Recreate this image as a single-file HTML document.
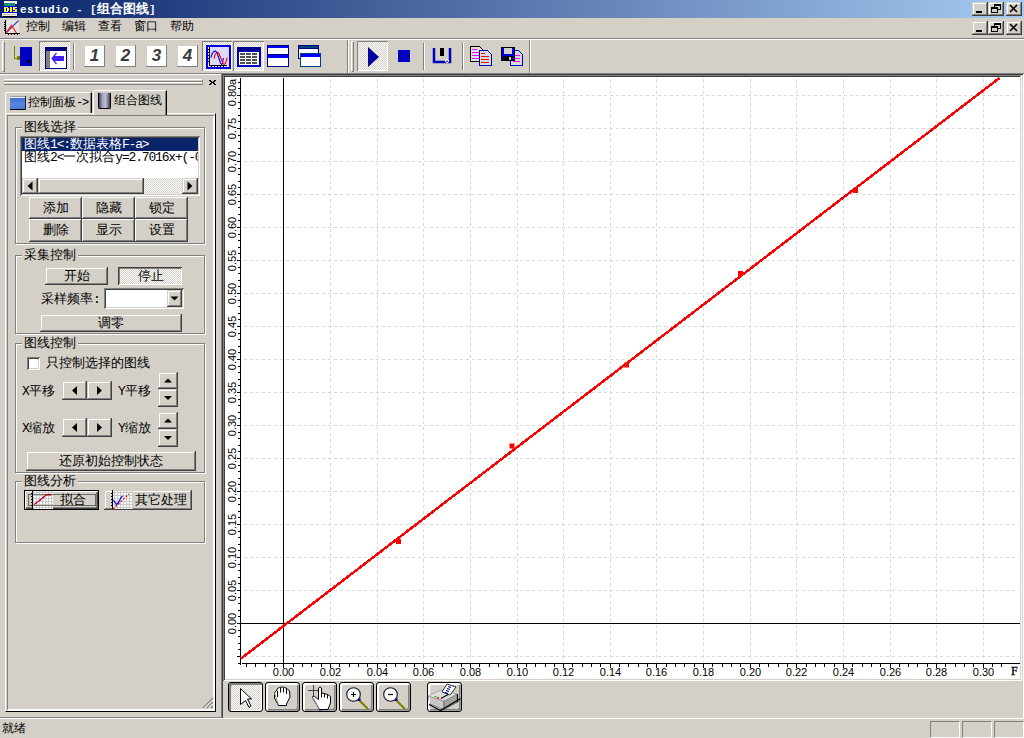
<!DOCTYPE html><html><head><meta charset="utf-8"><style>
*{margin:0;padding:0;box-sizing:border-box}
html,body{width:1024px;height:738px;overflow:hidden;background:#d4d0c8;font-family:"Liberation Sans",sans-serif;font-size:12px;color:#000}
div{position:absolute}
.t{white-space:nowrap;line-height:13px;font-size:13px;margin-top:-1px}
.rz{background:#d4d0c8;box-shadow:inset -1px -1px #404040,inset 1px 1px #fff,inset -2px -2px #808080}
.rz2{background:#d4d0c8;box-shadow:inset -1px -1px #404040,inset 1px 1px #d4d0c8,inset -2px -2px #808080,inset 2px 2px #fff}
.sk{background:#fff;box-shadow:inset 1px 1px #808080,inset -1px -1px #fff,inset 2px 2px #404040,inset -2px -2px #d4d0c8}
.pr{box-shadow:inset 1px 1px #808080,inset -1px -1px #fff;background:conic-gradient(#fff 25%,#d4d0c8 0 50%,#fff 0 75%,#d4d0c8 0) 0 0/2px 2px}
.dith{background:conic-gradient(#fff 25%,#d4d0c8 0 50%,#fff 0 75%,#d4d0c8 0) 0 0/2px 2px}
.etch{border:1px solid #808080;box-shadow:inset 1px 1px #fff,1px 1px #fff}
.m{font-family:'Liberation Mono',monospace;letter-spacing:-0.09em}
.cap{background:#d4d0c8;padding:0 2px}
.bb{border:1px solid #000;border-radius:3px;background:#d4d0c8;box-shadow:inset 2px 2px #fff,inset -1px -1px #a0a0a0,inset -2px -2px #808080}
svg{position:absolute;overflow:visible}
</style></head><body>
<div class="" style="left:0px;top:0px;width:1024px;height:18px;background:linear-gradient(to right,#0a246a,#a6caf0)"></div>
<svg style="left:2px;top:1px" width="16" height="16" shape-rendering="crispEdges">
<rect x="2" y="0" width="13" height="3" fill="#f8f8f0"/>
<rect x="2" y="2" width="11" height="3" fill="#208878"/>
<rect x="6" y="3" width="1" height="1" fill="#00ff00"/>
<rect x="1" y="5" width="15" height="9" fill="#0000ff"/>
<g fill="#ffff00">
<rect x="2" y="6" width="2" height="5"/><rect x="4" y="6" width="2" height="1"/><rect x="4" y="10" width="2" height="1"/><rect x="5" y="7" width="2" height="3"/>
<rect x="8" y="6" width="2" height="5"/>
<rect x="11" y="6" width="4" height="1"/><rect x="11" y="7" width="2" height="1"/><rect x="11" y="8" width="4" height="1"/><rect x="13" y="9" width="2" height="1"/><rect x="11" y="10" width="4" height="1"/>
</g>
<rect x="0" y="12" width="15" height="3" fill="#f0f0e0"/>
<rect x="1" y="13" width="13" height="1" fill="#c8c8b8"/>
<rect x="1" y="15" width="14" height="1" fill="#000"/>
<rect x="15" y="2" width="1" height="13" fill="#0000c0"/>
</svg>
<div class="t" style="left:20px;top:3px;color:#fff;font-weight:bold"><span class="m" style="letter-spacing:0.4px;font-size:11px">estudio - [</span>组合图线<span class="m" style="font-size:11px">]</span></div>
<div class="rz2" style="left:972px;top:2px;width:16px;height:14px;"></div>
<div class="" style="left:976px;top:11px;width:6px;height:2px;background:#000"></div>
<div class="rz2" style="left:988px;top:2px;width:16px;height:14px;"></div>
<svg style="left:988px;top:2px" width="16" height="14"><rect x="6.5" y="2.5" width="6" height="5" fill="none" stroke="#000"/><rect x="6" y="2" width="7" height="2" fill="#000"/><rect x="3.5" y="5.5" width="6" height="5" fill="#d4d0c8" stroke="#000"/><rect x="3" y="5" width="7" height="2" fill="#000"/></svg>
<div class="rz2" style="left:1006px;top:2px;width:16px;height:14px;"></div>
<svg style="left:1006px;top:2px" width="16" height="14"><path d="M4 3L11 10M11 3L4 10" stroke="#000" stroke-width="1.6"/></svg>
<div class="rz2" style="left:972px;top:21px;width:16px;height:14px;"></div>
<div class="" style="left:976px;top:30px;width:6px;height:2px;background:#000"></div>
<div class="rz2" style="left:988px;top:21px;width:16px;height:14px;"></div>
<svg style="left:988px;top:21px" width="16" height="14"><rect x="6.5" y="2.5" width="6" height="5" fill="none" stroke="#000"/><rect x="6" y="2" width="7" height="2" fill="#000"/><rect x="3.5" y="5.5" width="6" height="5" fill="#d4d0c8" stroke="#000"/><rect x="3" y="5" width="7" height="2" fill="#000"/></svg>
<div class="rz2" style="left:1006px;top:21px;width:16px;height:14px;"></div>
<svg style="left:1006px;top:21px" width="16" height="14"><path d="M4 3L11 10M11 3L4 10" stroke="#000" stroke-width="1.6"/></svg>
<svg style="left:4px;top:20px" width="16" height="16" shape-rendering="crispEdges">
<rect x="3" y="0" width="12" height="13" fill="#e4e4e4"/>
<rect x="1" y="0" width="1" height="14" fill="#000"/>
<rect x="1" y="13" width="15" height="1" fill="#000"/>
<g fill="#000"><rect x="0" y="2" width="1" height="1"/><rect x="0" y="4" width="1" height="1"/><rect x="0" y="6" width="1" height="1"/><rect x="0" y="8" width="1" height="1"/><rect x="0" y="10" width="1" height="1"/>
<rect x="4" y="14" width="1" height="1"/><rect x="7" y="14" width="1" height="1"/><rect x="10" y="14" width="1" height="1"/><rect x="13" y="14" width="1" height="1"/></g>
</svg>
<svg style="left:4px;top:20px" width="16" height="16">
<path d="M2.5 12.5L14.5 0.5" stroke="#4040c0" stroke-width="1.1"/>
<path d="M2 13L7.5 5.5L12.5 13" stroke="#ff2020" stroke-width="1.3" fill="none"/>
</svg>
<div class="t" style="left:26px;top:21px;font-size:12px;line-height:12px">控制</div>
<div class="t" style="left:62px;top:21px;font-size:12px;line-height:12px">编辑</div>
<div class="t" style="left:98px;top:21px;font-size:12px;line-height:12px">查看</div>
<div class="t" style="left:134px;top:21px;font-size:12px;line-height:12px">窗口</div>
<div class="t" style="left:170px;top:21px;font-size:12px;line-height:12px">帮助</div>
<div class="" style="left:0px;top:38px;width:1024px;height:1px;background:#808080"></div>
<div class="" style="left:0px;top:39px;width:1024px;height:1px;background:#fff"></div>
<div class="" style="left:0px;top:73px;width:1024px;height:1px;background:#808080"></div>
<div class="" style="left:2px;top:41px;width:3px;height:31px;border-left:1px solid #fff;border-top:1px solid #fff;border-right:1px solid #808080;border-bottom:1px solid #808080"></div>
<svg style="left:13px;top:45px" width="22" height="22" shape-rendering="crispEdges">
<rect x="1" y="1" width="1" height="13" fill="#808000"/>
<rect x="1" y="13" width="6" height="1" fill="#808000"/>
<rect x="4" y="11" width="3" height="4" fill="#808000"/>
<rect x="7" y="2" width="12" height="19" fill="#0000c0"/>
<rect x="14" y="15" width="3" height="3" fill="#000"/>
</svg>
<div class="pr" style="left:39px;top:41px;width:31px;height:30px;"></div>
<svg style="left:45px;top:47px" width="22" height="22" shape-rendering="crispEdges">
<rect x="0" y="0" width="22" height="22" fill="#000080"/>
<rect x="1" y="4" width="4" height="17" fill="#808080"/>
<rect x="5" y="4" width="16" height="17" fill="#fff"/>
<rect x="8" y="9" width="11" height="5" fill="#4020ff"/>
</svg>
<svg style="left:45px;top:47px" width="22" height="22"><path d="M11.5 6L7 11.5L11.5 17" stroke="#4020ff" stroke-width="1.2" fill="none"/><path d="M7 11.5L10 9V14z" fill="#4020ff"/></svg>
<div class="" style="left:73px;top:43px;width:1px;height:27px;background:#808080"></div>
<div class="" style="left:74px;top:43px;width:1px;height:27px;background:#fff"></div>
<div class="" style="left:85px;top:46px;width:19px;height:20px;background:#fff"></div>
<div class="" style="left:104px;top:45px;width:1px;height:22px;background:#808080"></div>
<div class="" style="left:84px;top:66px;width:21px;height:1px;background:#808080"></div>
<svg style="left:85px;top:46px" width="19" height="20"><text x="9.5" y="15" text-anchor="middle" font-family="Liberation Sans" font-weight="bold" font-style="italic" font-size="17" fill="#3c3c3c">1</text></svg>
<div class="" style="left:116px;top:46px;width:19px;height:20px;background:#fff"></div>
<div class="" style="left:135px;top:45px;width:1px;height:22px;background:#808080"></div>
<div class="" style="left:115px;top:66px;width:21px;height:1px;background:#808080"></div>
<svg style="left:116px;top:46px" width="19" height="20"><text x="9.5" y="15" text-anchor="middle" font-family="Liberation Sans" font-weight="bold" font-style="italic" font-size="17" fill="#3c3c3c">2</text></svg>
<div class="" style="left:147px;top:46px;width:19px;height:20px;background:#fff"></div>
<div class="" style="left:166px;top:45px;width:1px;height:22px;background:#808080"></div>
<div class="" style="left:146px;top:66px;width:21px;height:1px;background:#808080"></div>
<svg style="left:147px;top:46px" width="19" height="20"><text x="9.5" y="15" text-anchor="middle" font-family="Liberation Sans" font-weight="bold" font-style="italic" font-size="17" fill="#3c3c3c">3</text></svg>
<div class="" style="left:178px;top:46px;width:19px;height:20px;background:#fff"></div>
<div class="" style="left:197px;top:45px;width:1px;height:22px;background:#808080"></div>
<div class="" style="left:177px;top:66px;width:21px;height:1px;background:#808080"></div>
<svg style="left:178px;top:46px" width="19" height="20"><text x="9.5" y="15" text-anchor="middle" font-family="Liberation Sans" font-weight="bold" font-style="italic" font-size="17" fill="#3c3c3c">4</text></svg>
<div class="pr" style="left:202px;top:41px;width:30px;height:30px;"></div>
<svg style="left:206px;top:45px" width="25" height="24" shape-rendering="crispEdges">
<rect x="0" y="0" width="25" height="24" fill="#0000e0"/>
<rect x="2" y="2" width="21" height="20" fill="#dcdcf8"/>
<path d="M3.5 2V21M3 20.5H21" stroke="#000"/>
<path d="M2 4.5H3M2 7.5H3M2 10.5H3M2 13.5H3M2 16.5H3M5.5 21V22M8.5 21V22M11.5 21V22M14.5 21V22M17.5 21V22" stroke="#000"/>
</svg>
<svg style="left:206px;top:45px" width="25" height="24">
<polyline points="5,12.5 6,9 7.5,7 9,6 10.5,7 11.5,9 12.5,12 13.5,15 14.5,18 15.5,19.5 16.5,18.5 17,15 17.5,13" fill="none" stroke="#0000ff" stroke-width="1.1"/>
<polyline points="8,13.5 9,10 10.5,8 12,7.5 13,8.5 14,11 15,13.5 16,16 17,18.5 18,19.5 19.5,18.5 20.5,15 21,12.5" fill="none" stroke="#ff0000" stroke-width="1.1"/>
</svg>
<div class="pr" style="left:233px;top:41px;width:31px;height:30px;"></div>
<svg style="left:237px;top:47px" width="24" height="20" shape-rendering="crispEdges">
<rect x="0" y="0" width="24" height="20" fill="#0000c0"/>
<rect x="0" y="0" width="24" height="4" fill="#000090"/>
<rect x="2" y="5" width="20" height="13" fill="#fff"/>
<g fill="#505050"><rect x="3" y="6" width="5" height="2"/><rect x="9" y="6" width="5" height="2"/><rect x="15" y="6" width="5" height="2"/>
<rect x="3" y="9" width="5" height="2"/><rect x="9" y="9" width="5" height="2"/><rect x="15" y="9" width="5" height="2"/>
<rect x="3" y="12" width="5" height="2"/><rect x="9" y="12" width="5" height="2"/><rect x="15" y="12" width="5" height="2"/>
<rect x="3" y="15" width="5" height="2"/><rect x="9" y="15" width="5" height="2"/><rect x="15" y="15" width="5" height="2"/></g>
</svg>
<svg style="left:267px;top:45px" width="22" height="22" shape-rendering="crispEdges">
<rect x="0" y="0" width="22" height="22" fill="#000080"/>
<rect x="1" y="1" width="20" height="2" fill="#0000ff"/>
<rect x="1" y="3" width="20" height="6" fill="#fff"/>
<rect x="1" y="10" width="20" height="3" fill="#0000ff"/>
<rect x="1" y="13" width="20" height="8" fill="#fff"/>
</svg>
<svg style="left:298px;top:45px" width="24" height="22" shape-rendering="crispEdges">
<rect x="0" y="0" width="21" height="14" fill="#000080"/>
<rect x="1" y="1" width="19" height="2" fill="#004080"/>
<rect x="1" y="4" width="19" height="9" fill="#fff"/>
<rect x="2" y="8" width="21" height="14" fill="#004080"/>
<rect x="3" y="9" width="19" height="3" fill="#0000ff"/>
<rect x="3" y="12" width="19" height="9" fill="#fff"/>
</svg>
<div class="" style="left:347px;top:40px;width:1px;height:33px;background:#808080"></div>
<div class="" style="left:348px;top:40px;width:1px;height:33px;background:#fff"></div>
<div class="" style="left:351px;top:41px;width:3px;height:31px;border-left:1px solid #fff;border-top:1px solid #fff;border-right:1px solid #808080;border-bottom:1px solid #808080"></div>
<div class="pr" style="left:357px;top:41px;width:31px;height:30px;"></div>
<svg style="left:367px;top:46px" width="14" height="22"><path d="M1 1L12 11L1 21z" fill="#0000a0"/></svg>
<div class="" style="left:398px;top:50px;width:12px;height:12px;background:#0000c0"></div>
<div class="" style="left:423px;top:43px;width:1px;height:27px;background:#808080"></div>
<div class="" style="left:424px;top:43px;width:1px;height:27px;background:#fff"></div>
<svg style="left:432px;top:46px" width="20" height="19">
<path d="M2 2V16H18V2" stroke="#0000c0" stroke-width="2.5" fill="none"/>
<rect x="8" y="2" width="4" height="8" fill="#000"/>
<circle cx="15" cy="15" r="1.5" fill="none" stroke="#fff"/>
</svg>
<div class="" style="left:462px;top:43px;width:1px;height:27px;background:#808080"></div>
<div class="" style="left:463px;top:43px;width:1px;height:27px;background:#fff"></div>
<svg style="left:470px;top:46px" width="23" height="21" shape-rendering="crispEdges">
<path d="M0.5 0.5H9.5L12.5 3.5V15.5H0.5z" fill="#dce4e4" stroke="#000"/>
<g stroke="#ff00ff"><path d="M2 3.5H7M2 6.5H9M2 9.5H9M2 12.5H9"/></g>
<path d="M9.5 4.5H17.5L21.5 8.5V19.5H9.5z" fill="#d4dcdc" stroke="#0000c0"/>
<g stroke="#ff0000"><path d="M11 7.5H15M11 10.5H19M11 13.5H19M11 16.5H19"/></g>
</svg>
<svg style="left:501px;top:47px" width="23" height="20" shape-rendering="crispEdges">
<path d="M9.5 3.5H17.5L21.5 7.5V18.5H9.5z" fill="#d4dcdc" stroke="#0000c0"/>
<g stroke="#ff00ff"><path d="M12 8.5H19M12 11.5H19M12 14.5H19"/></g>
<rect x="0" y="0" width="14" height="14" fill="#000"/>
<rect x="1" y="1" width="12" height="12" fill="#0000e0"/>
<rect x="3" y="1" width="8" height="6" fill="#d4d0c8"/>
<rect x="2" y="9" width="10" height="5" fill="#000"/>
<rect x="8" y="10" width="2" height="3" fill="#d4d0c8"/>
</svg>
<div class="" style="left:529px;top:40px;width:1px;height:33px;background:#808080"></div>
<div class="" style="left:530px;top:40px;width:1px;height:33px;background:#fff"></div>
<div class="" style="left:0px;top:74px;width:221px;height:1px;background:#fff"></div>
<div class="" style="left:221px;top:74px;width:1px;height:644px;background:#808080"></div>
<div class="" style="left:222px;top:74px;width:1px;height:644px;background:#404040"></div>
<div class="" style="left:0px;top:717px;width:222px;height:1px;background:#808080"></div>
<div class="" style="left:4px;top:79px;width:199px;height:3px;border-top:1px solid #fff;border-bottom:1px solid #808080;border-right:1px solid #808080"></div>
<div class="" style="left:4px;top:82px;width:199px;height:3px;border-top:1px solid #fff;border-bottom:1px solid #808080;border-right:1px solid #808080"></div>
<svg style="left:209px;top:80px" width="7" height="6" shape-rendering="crispEdges"><g fill="#000">
<rect x="0" y="0" width="2" height="1"/><rect x="5" y="0" width="2" height="1"/>
<rect x="1" y="1" width="2" height="1"/><rect x="4" y="1" width="2" height="1"/>
<rect x="2" y="2" width="3" height="1"/>
<rect x="1" y="3" width="2" height="1"/><rect x="4" y="3" width="2" height="1"/>
<rect x="0" y="4" width="2" height="1"/><rect x="5" y="4" width="2" height="1"/></g></svg>
<div class="" style="left:5px;top:113px;width:211px;height:599px;border-left:1px solid #fff;border-top:1px solid #fff;border-right:1px solid #000;border-bottom:1px solid #000"></div>
<div class="" style="left:7px;top:115px;width:208px;height:596px;border-left:1px solid #808080;border-top:1px solid #808080;border-right:2px solid #fff;border-bottom:2px solid #fff"></div>
<div class="" style="left:5px;top:92px;width:87px;height:21px;border-left:1px solid #fff;border-top:1px solid #fff;border-right:1px solid #000;border-top-left-radius:2px;box-shadow:inset -1px 0 #808080;background:#d4d0c8"></div>
<div class="" style="left:10px;top:96px;width:16px;height:14px;background:linear-gradient(#a0a0a0 0 1px,#f0f0f0 1px 2px,#4070d0 2px,#5588e0 60%,#4a7ad8);border-bottom:1px solid #000;border-right:1px solid #102050"></div>
<div class="t" style="left:28px;top:97px;font-size:12px;line-height:12px">控制面板<span class="m">-&gt;</span></div>
<div class="" style="left:93px;top:90px;width:74px;height:25px;border-left:1px solid #fff;border-top:1px solid #fff;border-right:1px solid #000;border-top-left-radius:2px;box-shadow:inset -1px 0 #808080;background:#d4d0c8"></div>
<div class="" style="left:98px;top:93px;width:13px;height:16px;background:linear-gradient(90deg,#404050,#a0a0c0 30%,#c0c0d0 60%,#404050);border:1px solid #000;border-top:none;border-radius:0 0 2px 2px"></div>
<div class="t" style="left:114px;top:95px;font-size:12px;line-height:12px">组合图线</div>
<div class="etch" style="left:15px;top:127px;width:190px;height:117px;"></div>
<div class="t cap" style="left:22px;top:121px;">图线选择</div>
<div class="etch" style="left:15px;top:255px;width:190px;height:79px;"></div>
<div class="t cap" style="left:22px;top:249px;">采集控制</div>
<div class="etch" style="left:15px;top:343px;width:190px;height:130px;"></div>
<div class="t cap" style="left:22px;top:337px;">图线控制</div>
<div class="etch" style="left:15px;top:481px;width:190px;height:62px;"></div>
<div class="t cap" style="left:22px;top:475px;">图线分析</div>
<div class="sk" style="left:20px;top:136px;width:180px;height:60px;"></div>
<div class="" style="left:22px;top:138px;width:176px;height:13px;background:#0a246a"></div>
<div class="t" style="left:24px;top:138px;color:#fff">图线<span class="m">1&lt;:</span>数据表格<span class="m">F-a&gt;</span></div>
<div style="left:22px;top:151px;width:176px;height:13px;overflow:hidden"><div class="t" style="left:2px;top:0">图线<span class="m">2&lt;</span>一次拟合<span class="m">y=2.7016x+(-0.0023)&gt;</span></div></div>
<div class="dith" style="left:22px;top:178px;width:176px;height:16px;"></div>
<div class="rz2" style="left:22px;top:178px;width:16px;height:16px;"></div>
<svg style="left:0;top:0" width="1024" height="738"><polygon points="32.5,181.5 32.5,190.5 27.5,186.0" fill="#000"/></svg>
<div class="rz2" style="left:38px;top:178px;width:106px;height:16px;"></div>
<div class="rz2" style="left:182px;top:178px;width:16px;height:16px;"></div>
<svg style="left:0;top:0" width="1024" height="738"><polygon points="187.5,181.5 187.5,190.5 192.5,186.0" fill="#000"/></svg>
<div class="rz" style="left:29px;top:197px;width:53px;height:22px;"></div>
<div class="t" style="left:29px;top:202px;width:53px;text-align:center">添加</div>
<div class="rz" style="left:29px;top:219px;width:53px;height:23px;"></div>
<div class="t" style="left:29px;top:224px;width:53px;text-align:center">删除</div>
<div class="rz" style="left:82px;top:197px;width:53px;height:22px;"></div>
<div class="t" style="left:82px;top:202px;width:53px;text-align:center">隐藏</div>
<div class="rz" style="left:82px;top:219px;width:53px;height:23px;"></div>
<div class="t" style="left:82px;top:224px;width:53px;text-align:center">显示</div>
<div class="rz" style="left:135px;top:197px;width:53px;height:22px;"></div>
<div class="t" style="left:135px;top:202px;width:53px;text-align:center">锁定</div>
<div class="rz" style="left:135px;top:219px;width:53px;height:23px;"></div>
<div class="t" style="left:135px;top:224px;width:53px;text-align:center">设置</div>
<div class="rz2" style="left:45px;top:267px;width:63px;height:18px;"></div>
<div class="t" style="left:45px;top:270px;width:63px;text-align:center">开始</div>
<div class="pr" style="left:118px;top:267px;width:64px;height:18px;box-shadow:inset 1px 1px #404040,inset -1px -1px #fff,inset 2px 2px #808080"></div>
<div class="t" style="left:119px;top:270px;width:64px;text-align:center">停止</div>
<div class="t" style="left:41px;top:293px;">采样频率<span class="m">:</span></div>
<div class="sk" style="left:104px;top:288px;width:80px;height:21px;"></div>
<div class="rz2" style="left:167px;top:290px;width:15px;height:17px;"></div>
<svg style="left:0;top:0" width="1024" height="738"><polygon points="170.5,296.5 178.5,296.5 174.5,300.5" fill="#000"/></svg>
<div class="rz2" style="left:40px;top:314px;width:142px;height:18px;"></div>
<div class="t" style="left:40px;top:317px;width:142px;text-align:center">调零</div>
<div class="sk" style="left:27px;top:357px;width:13px;height:13px;"></div>
<div class="t" style="left:46px;top:357px;">只控制选择的图线</div>
<div class="t" style="left:22px;top:385px;"><span class="m">X</span>平移</div>
<div class="t" style="left:118px;top:385px;"><span class="m">Y</span>平移</div>
<div class="rz2" style="left:62px;top:381px;width:25px;height:19px;"></div>
<svg style="left:0;top:0" width="1024" height="738"><polygon points="77.0,386.0 77.0,395.0 72.0,390.5" fill="#000"/></svg>
<div class="rz2" style="left:87px;top:381px;width:25px;height:19px;"></div>
<svg style="left:0;top:0" width="1024" height="738"><polygon points="97.0,386.0 97.0,395.0 102.0,390.5" fill="#000"/></svg>
<div class="t" style="left:22px;top:422px;"><span class="m">X</span>缩放</div>
<div class="t" style="left:118px;top:422px;"><span class="m">Y</span>缩放</div>
<div class="rz2" style="left:62px;top:418px;width:25px;height:19px;"></div>
<svg style="left:0;top:0" width="1024" height="738"><polygon points="77.0,423.0 77.0,432.0 72.0,427.5" fill="#000"/></svg>
<div class="rz2" style="left:87px;top:418px;width:25px;height:19px;"></div>
<svg style="left:0;top:0" width="1024" height="738"><polygon points="97.0,423.0 97.0,432.0 102.0,427.5" fill="#000"/></svg>
<div class="rz2" style="left:158px;top:372px;width:20px;height:17px;"></div>
<svg style="left:0;top:0" width="1024" height="738"><polygon points="164.0,382.5 172.0,382.5 168.0,378.5" fill="#000"/></svg>
<div class="rz2" style="left:158px;top:389px;width:20px;height:18px;"></div>
<svg style="left:0;top:0" width="1024" height="738"><polygon points="164.0,396.0 172.0,396.0 168.0,400.0" fill="#000"/></svg>
<div class="rz2" style="left:158px;top:412px;width:20px;height:17px;"></div>
<svg style="left:0;top:0" width="1024" height="738"><polygon points="164.0,422.5 172.0,422.5 168.0,418.5" fill="#000"/></svg>
<div class="rz2" style="left:158px;top:429px;width:20px;height:18px;"></div>
<svg style="left:0;top:0" width="1024" height="738"><polygon points="164.0,436.0 172.0,436.0 168.0,440.0" fill="#000"/></svg>
<div class="rz2" style="left:26px;top:451px;width:170px;height:20px;"></div>
<div class="t" style="left:26px;top:455px;width:170px;text-align:center">还原初始控制状态</div>
<div class="" style="left:24px;top:490px;width:75px;height:20px;border:1px solid #000;box-shadow:inset 1px 1px #fff,inset -1px -1px #404040,inset -2px -2px #808080;background:#d4d0c8"></div>
<svg style="left:0;top:0" width="1024" height="738">
<defs><pattern id="gp" width="3" height="3" patternUnits="userSpaceOnUse"><rect width="3" height="3" fill="#c8c8c8"/><rect x="1" y="1" width="2" height="2" fill="#fff"/></pattern></defs>
<rect x="32" y="491" width="21" height="18" fill="url(#gp)"/>
<path d="M32.5 491V509" stroke="#000"/>
<path d="M31 493.5H32M31 496.5H32M31 499.5H32M31 502.5H32M31 505.5H32" stroke="#000"/>
<polyline points="34,504.5 37,502.5 40,500 43,497.5 46,495 49,494.5 51,495" fill="none" stroke="#ff0000" stroke-width="1.3"/>
<path d="M35.5 503.5L36.5 503M39.5 500.5L40.5 500M43 497.5L44 497" stroke="#0000ff" stroke-width="1.3"/>
<rect x="28.5" y="494.5" width="67" height="11" fill="none" stroke="#000" stroke-dasharray="1 1"/>
</svg>
<div class="t" style="left:60px;top:494px;">拟合</div>
<div class="rz2" style="left:104px;top:490px;width:88px;height:20px;"></div>
<div class="t" style="left:104px;top:494px;width:88px;text-align:center"></div>
<svg style="left:0;top:0" width="1024" height="738">
<rect x="112" y="491" width="21" height="18" fill="url(#gp)"/>
<path d="M112.5 490V509" stroke="#000"/>
<path d="M111 493.5H112M111 496.5H112M111 499.5H112M111 502.5H112M111 505.5H112" stroke="#000"/>
<path d="M113 509L129 494" stroke="#ff0000" stroke-width="1.2" stroke-dasharray="2 1.5"/>
<polyline points="113.5,500 116.5,504.5 118.5,502.5 121,497.5 122.5,496" fill="none" stroke="#0000ff" stroke-width="1.2"/>
</svg>
<div class="t" style="left:135px;top:494px;">其它处理</div>
<svg style="left:202px;top:697px" width="12" height="13"><path d="M11 1L1 11M11 5L5 11M11 9L9 11" stroke="#808080" stroke-width="1.2"/><path d="M11 2.5L2.5 11M11 6.5L6.5 11" stroke="#fff" stroke-width="0.8"/></svg>
<div class="" style="left:222px;top:74px;width:802px;height:1px;background:#404040"></div>
<div class="" style="left:223px;top:75px;width:799px;height:1px;background:#808080"></div>
<div class="" style="left:224px;top:76px;width:797px;height:1px;background:#404040"></div>
<div class="" style="left:223px;top:75px;width:1px;height:606px;background:#808080"></div>
<div class="" style="left:224px;top:76px;width:1px;height:604px;background:#404040"></div>
<div class="" style="left:225px;top:77px;width:795px;height:602px;background:#fff"></div>
<div class="" style="left:1020px;top:76px;width:1px;height:604px;background:#d4d0c8"></div>
<div class="" style="left:1021px;top:75px;width:1px;height:606px;background:#fff"></div>
<div class="" style="left:225px;top:679px;width:796px;height:1px;background:#d4d0c8"></div>
<div class="" style="left:224px;top:680px;width:798px;height:1px;background:#fff"></div>
<div class="" style="left:1023px;top:74px;width:1px;height:644px;background:#fff"></div>
<svg style="left:0;top:0" width="1024" height="738" shape-rendering="crispEdges">
<line x1="283.5" y1="78" x2="283.5" y2="662" stroke="#d8d8d8" stroke-dasharray="3 3" stroke-dashoffset="5"/>
<line x1="330.5" y1="78" x2="330.5" y2="662" stroke="#d8d8d8" stroke-dasharray="3 3" stroke-dashoffset="5"/>
<line x1="377.5" y1="78" x2="377.5" y2="662" stroke="#d8d8d8" stroke-dasharray="3 3" stroke-dashoffset="5"/>
<line x1="423.5" y1="78" x2="423.5" y2="662" stroke="#d8d8d8" stroke-dasharray="3 3" stroke-dashoffset="5"/>
<line x1="470.5" y1="78" x2="470.5" y2="662" stroke="#d8d8d8" stroke-dasharray="3 3" stroke-dashoffset="5"/>
<line x1="517.5" y1="78" x2="517.5" y2="662" stroke="#d8d8d8" stroke-dasharray="3 3" stroke-dashoffset="5"/>
<line x1="563.5" y1="78" x2="563.5" y2="662" stroke="#d8d8d8" stroke-dasharray="3 3" stroke-dashoffset="5"/>
<line x1="610.5" y1="78" x2="610.5" y2="662" stroke="#d8d8d8" stroke-dasharray="3 3" stroke-dashoffset="5"/>
<line x1="656.5" y1="78" x2="656.5" y2="662" stroke="#d8d8d8" stroke-dasharray="3 3" stroke-dashoffset="5"/>
<line x1="703.5" y1="78" x2="703.5" y2="662" stroke="#d8d8d8" stroke-dasharray="3 3" stroke-dashoffset="5"/>
<line x1="750.5" y1="78" x2="750.5" y2="662" stroke="#d8d8d8" stroke-dasharray="3 3" stroke-dashoffset="5"/>
<line x1="796.5" y1="78" x2="796.5" y2="662" stroke="#d8d8d8" stroke-dasharray="3 3" stroke-dashoffset="5"/>
<line x1="843.5" y1="78" x2="843.5" y2="662" stroke="#d8d8d8" stroke-dasharray="3 3" stroke-dashoffset="5"/>
<line x1="890.5" y1="78" x2="890.5" y2="662" stroke="#d8d8d8" stroke-dasharray="3 3" stroke-dashoffset="5"/>
<line x1="936.5" y1="78" x2="936.5" y2="662" stroke="#d8d8d8" stroke-dasharray="3 3" stroke-dashoffset="5"/>
<line x1="983.5" y1="78" x2="983.5" y2="662" stroke="#d8d8d8" stroke-dasharray="3 3" stroke-dashoffset="5"/>
<line x1="241" y1="656.5" x2="1019" y2="656.5" stroke="#d8d8d8" stroke-dasharray="3 3" stroke-dashoffset="3"/>
<line x1="241" y1="623.5" x2="1019" y2="623.5" stroke="#d8d8d8" stroke-dasharray="3 3" stroke-dashoffset="3"/>
<line x1="241" y1="590.5" x2="1019" y2="590.5" stroke="#d8d8d8" stroke-dasharray="3 3" stroke-dashoffset="3"/>
<line x1="241" y1="557.5" x2="1019" y2="557.5" stroke="#d8d8d8" stroke-dasharray="3 3" stroke-dashoffset="3"/>
<line x1="241" y1="524.5" x2="1019" y2="524.5" stroke="#d8d8d8" stroke-dasharray="3 3" stroke-dashoffset="3"/>
<line x1="241" y1="491.5" x2="1019" y2="491.5" stroke="#d8d8d8" stroke-dasharray="3 3" stroke-dashoffset="3"/>
<line x1="241" y1="458.5" x2="1019" y2="458.5" stroke="#d8d8d8" stroke-dasharray="3 3" stroke-dashoffset="3"/>
<line x1="241" y1="425.5" x2="1019" y2="425.5" stroke="#d8d8d8" stroke-dasharray="3 3" stroke-dashoffset="3"/>
<line x1="241" y1="392.5" x2="1019" y2="392.5" stroke="#d8d8d8" stroke-dasharray="3 3" stroke-dashoffset="3"/>
<line x1="241" y1="359.5" x2="1019" y2="359.5" stroke="#d8d8d8" stroke-dasharray="3 3" stroke-dashoffset="3"/>
<line x1="241" y1="326.5" x2="1019" y2="326.5" stroke="#d8d8d8" stroke-dasharray="3 3" stroke-dashoffset="3"/>
<line x1="241" y1="293.5" x2="1019" y2="293.5" stroke="#d8d8d8" stroke-dasharray="3 3" stroke-dashoffset="3"/>
<line x1="241" y1="260.5" x2="1019" y2="260.5" stroke="#d8d8d8" stroke-dasharray="3 3" stroke-dashoffset="3"/>
<line x1="241" y1="227.5" x2="1019" y2="227.5" stroke="#d8d8d8" stroke-dasharray="3 3" stroke-dashoffset="3"/>
<line x1="241" y1="194.5" x2="1019" y2="194.5" stroke="#d8d8d8" stroke-dasharray="3 3" stroke-dashoffset="3"/>
<line x1="241" y1="161.5" x2="1019" y2="161.5" stroke="#d8d8d8" stroke-dasharray="3 3" stroke-dashoffset="3"/>
<line x1="241" y1="128.5" x2="1019" y2="128.5" stroke="#d8d8d8" stroke-dasharray="3 3" stroke-dashoffset="3"/>
<line x1="241" y1="95.5" x2="1019" y2="95.5" stroke="#d8d8d8" stroke-dasharray="3 3" stroke-dashoffset="3"/>
<line x1="283.5" y1="78" x2="283.5" y2="663" stroke="#000"/>
<line x1="241" y1="623.5" x2="1020" y2="623.5" stroke="#000"/>
<line x1="240.5" y1="78" x2="240.5" y2="665" stroke="#000"/>
<line x1="242" y1="663.5" x2="1020" y2="663.5" stroke="#000"/>
<line x1="238" y1="663.5" x2="240" y2="663.5" stroke="#000"/>
<line x1="237" y1="656.5" x2="240" y2="656.5" stroke="#000"/>
<line x1="238" y1="649.5" x2="240" y2="649.5" stroke="#000"/>
<line x1="238" y1="643.5" x2="240" y2="643.5" stroke="#000"/>
<line x1="238" y1="636.5" x2="240" y2="636.5" stroke="#000"/>
<line x1="238" y1="630.5" x2="240" y2="630.5" stroke="#000"/>
<line x1="237" y1="623.5" x2="240" y2="623.5" stroke="#000"/>
<line x1="238" y1="616.5" x2="240" y2="616.5" stroke="#000"/>
<line x1="238" y1="610.5" x2="240" y2="610.5" stroke="#000"/>
<line x1="238" y1="603.5" x2="240" y2="603.5" stroke="#000"/>
<line x1="238" y1="597.5" x2="240" y2="597.5" stroke="#000"/>
<line x1="237" y1="590.5" x2="240" y2="590.5" stroke="#000"/>
<line x1="238" y1="583.5" x2="240" y2="583.5" stroke="#000"/>
<line x1="238" y1="577.5" x2="240" y2="577.5" stroke="#000"/>
<line x1="238" y1="570.5" x2="240" y2="570.5" stroke="#000"/>
<line x1="238" y1="564.5" x2="240" y2="564.5" stroke="#000"/>
<line x1="237" y1="557.5" x2="240" y2="557.5" stroke="#000"/>
<line x1="238" y1="550.5" x2="240" y2="550.5" stroke="#000"/>
<line x1="238" y1="544.5" x2="240" y2="544.5" stroke="#000"/>
<line x1="238" y1="537.5" x2="240" y2="537.5" stroke="#000"/>
<line x1="238" y1="531.5" x2="240" y2="531.5" stroke="#000"/>
<line x1="237" y1="524.5" x2="240" y2="524.5" stroke="#000"/>
<line x1="238" y1="517.5" x2="240" y2="517.5" stroke="#000"/>
<line x1="238" y1="511.5" x2="240" y2="511.5" stroke="#000"/>
<line x1="238" y1="504.5" x2="240" y2="504.5" stroke="#000"/>
<line x1="238" y1="498.5" x2="240" y2="498.5" stroke="#000"/>
<line x1="237" y1="491.5" x2="240" y2="491.5" stroke="#000"/>
<line x1="238" y1="484.5" x2="240" y2="484.5" stroke="#000"/>
<line x1="238" y1="478.5" x2="240" y2="478.5" stroke="#000"/>
<line x1="238" y1="471.5" x2="240" y2="471.5" stroke="#000"/>
<line x1="238" y1="465.5" x2="240" y2="465.5" stroke="#000"/>
<line x1="237" y1="458.5" x2="240" y2="458.5" stroke="#000"/>
<line x1="238" y1="451.5" x2="240" y2="451.5" stroke="#000"/>
<line x1="238" y1="445.5" x2="240" y2="445.5" stroke="#000"/>
<line x1="238" y1="438.5" x2="240" y2="438.5" stroke="#000"/>
<line x1="238" y1="432.5" x2="240" y2="432.5" stroke="#000"/>
<line x1="237" y1="425.5" x2="240" y2="425.5" stroke="#000"/>
<line x1="238" y1="418.5" x2="240" y2="418.5" stroke="#000"/>
<line x1="238" y1="412.5" x2="240" y2="412.5" stroke="#000"/>
<line x1="238" y1="405.5" x2="240" y2="405.5" stroke="#000"/>
<line x1="238" y1="399.5" x2="240" y2="399.5" stroke="#000"/>
<line x1="237" y1="392.5" x2="240" y2="392.5" stroke="#000"/>
<line x1="238" y1="385.5" x2="240" y2="385.5" stroke="#000"/>
<line x1="238" y1="379.5" x2="240" y2="379.5" stroke="#000"/>
<line x1="238" y1="372.5" x2="240" y2="372.5" stroke="#000"/>
<line x1="238" y1="366.5" x2="240" y2="366.5" stroke="#000"/>
<line x1="237" y1="359.5" x2="240" y2="359.5" stroke="#000"/>
<line x1="238" y1="352.5" x2="240" y2="352.5" stroke="#000"/>
<line x1="238" y1="346.5" x2="240" y2="346.5" stroke="#000"/>
<line x1="238" y1="339.5" x2="240" y2="339.5" stroke="#000"/>
<line x1="238" y1="333.5" x2="240" y2="333.5" stroke="#000"/>
<line x1="237" y1="326.5" x2="240" y2="326.5" stroke="#000"/>
<line x1="238" y1="319.5" x2="240" y2="319.5" stroke="#000"/>
<line x1="238" y1="313.5" x2="240" y2="313.5" stroke="#000"/>
<line x1="238" y1="306.5" x2="240" y2="306.5" stroke="#000"/>
<line x1="238" y1="300.5" x2="240" y2="300.5" stroke="#000"/>
<line x1="237" y1="293.5" x2="240" y2="293.5" stroke="#000"/>
<line x1="238" y1="286.5" x2="240" y2="286.5" stroke="#000"/>
<line x1="238" y1="280.5" x2="240" y2="280.5" stroke="#000"/>
<line x1="238" y1="273.5" x2="240" y2="273.5" stroke="#000"/>
<line x1="238" y1="267.5" x2="240" y2="267.5" stroke="#000"/>
<line x1="237" y1="260.5" x2="240" y2="260.5" stroke="#000"/>
<line x1="238" y1="253.5" x2="240" y2="253.5" stroke="#000"/>
<line x1="238" y1="247.5" x2="240" y2="247.5" stroke="#000"/>
<line x1="238" y1="240.5" x2="240" y2="240.5" stroke="#000"/>
<line x1="238" y1="234.5" x2="240" y2="234.5" stroke="#000"/>
<line x1="237" y1="227.5" x2="240" y2="227.5" stroke="#000"/>
<line x1="238" y1="220.5" x2="240" y2="220.5" stroke="#000"/>
<line x1="238" y1="214.5" x2="240" y2="214.5" stroke="#000"/>
<line x1="238" y1="207.5" x2="240" y2="207.5" stroke="#000"/>
<line x1="238" y1="201.5" x2="240" y2="201.5" stroke="#000"/>
<line x1="237" y1="194.5" x2="240" y2="194.5" stroke="#000"/>
<line x1="238" y1="187.5" x2="240" y2="187.5" stroke="#000"/>
<line x1="238" y1="181.5" x2="240" y2="181.5" stroke="#000"/>
<line x1="238" y1="174.5" x2="240" y2="174.5" stroke="#000"/>
<line x1="238" y1="168.5" x2="240" y2="168.5" stroke="#000"/>
<line x1="237" y1="161.5" x2="240" y2="161.5" stroke="#000"/>
<line x1="238" y1="154.5" x2="240" y2="154.5" stroke="#000"/>
<line x1="238" y1="148.5" x2="240" y2="148.5" stroke="#000"/>
<line x1="238" y1="141.5" x2="240" y2="141.5" stroke="#000"/>
<line x1="238" y1="135.5" x2="240" y2="135.5" stroke="#000"/>
<line x1="237" y1="128.5" x2="240" y2="128.5" stroke="#000"/>
<line x1="238" y1="121.5" x2="240" y2="121.5" stroke="#000"/>
<line x1="238" y1="115.5" x2="240" y2="115.5" stroke="#000"/>
<line x1="238" y1="108.5" x2="240" y2="108.5" stroke="#000"/>
<line x1="238" y1="102.5" x2="240" y2="102.5" stroke="#000"/>
<line x1="237" y1="95.5" x2="240" y2="95.5" stroke="#000"/>
<line x1="238" y1="88.5" x2="240" y2="88.5" stroke="#000"/>
<line x1="238" y1="82.5" x2="240" y2="82.5" stroke="#000"/>
<line x1="246.5" y1="664" x2="246.5" y2="667" stroke="#000"/>
<line x1="255.5" y1="664" x2="255.5" y2="667" stroke="#000"/>
<line x1="265.5" y1="664" x2="265.5" y2="667" stroke="#000"/>
<line x1="274.5" y1="664" x2="274.5" y2="667" stroke="#000"/>
<line x1="283.5" y1="664" x2="283.5" y2="668" stroke="#000"/>
<line x1="293.5" y1="664" x2="293.5" y2="667" stroke="#000"/>
<line x1="302.5" y1="664" x2="302.5" y2="667" stroke="#000"/>
<line x1="311.5" y1="664" x2="311.5" y2="667" stroke="#000"/>
<line x1="321.5" y1="664" x2="321.5" y2="667" stroke="#000"/>
<line x1="330.5" y1="664" x2="330.5" y2="668" stroke="#000"/>
<line x1="339.5" y1="664" x2="339.5" y2="667" stroke="#000"/>
<line x1="349.5" y1="664" x2="349.5" y2="667" stroke="#000"/>
<line x1="358.5" y1="664" x2="358.5" y2="667" stroke="#000"/>
<line x1="367.5" y1="664" x2="367.5" y2="667" stroke="#000"/>
<line x1="377.5" y1="664" x2="377.5" y2="668" stroke="#000"/>
<line x1="386.5" y1="664" x2="386.5" y2="667" stroke="#000"/>
<line x1="395.5" y1="664" x2="395.5" y2="667" stroke="#000"/>
<line x1="405.5" y1="664" x2="405.5" y2="667" stroke="#000"/>
<line x1="414.5" y1="664" x2="414.5" y2="667" stroke="#000"/>
<line x1="423.5" y1="664" x2="423.5" y2="668" stroke="#000"/>
<line x1="433.5" y1="664" x2="433.5" y2="667" stroke="#000"/>
<line x1="442.5" y1="664" x2="442.5" y2="667" stroke="#000"/>
<line x1="451.5" y1="664" x2="451.5" y2="667" stroke="#000"/>
<line x1="461.5" y1="664" x2="461.5" y2="667" stroke="#000"/>
<line x1="470.5" y1="664" x2="470.5" y2="668" stroke="#000"/>
<line x1="479.5" y1="664" x2="479.5" y2="667" stroke="#000"/>
<line x1="489.5" y1="664" x2="489.5" y2="667" stroke="#000"/>
<line x1="498.5" y1="664" x2="498.5" y2="667" stroke="#000"/>
<line x1="507.5" y1="664" x2="507.5" y2="667" stroke="#000"/>
<line x1="517.5" y1="664" x2="517.5" y2="668" stroke="#000"/>
<line x1="526.5" y1="664" x2="526.5" y2="667" stroke="#000"/>
<line x1="535.5" y1="664" x2="535.5" y2="667" stroke="#000"/>
<line x1="545.5" y1="664" x2="545.5" y2="667" stroke="#000"/>
<line x1="554.5" y1="664" x2="554.5" y2="667" stroke="#000"/>
<line x1="563.5" y1="664" x2="563.5" y2="668" stroke="#000"/>
<line x1="572.5" y1="664" x2="572.5" y2="667" stroke="#000"/>
<line x1="582.5" y1="664" x2="582.5" y2="667" stroke="#000"/>
<line x1="591.5" y1="664" x2="591.5" y2="667" stroke="#000"/>
<line x1="600.5" y1="664" x2="600.5" y2="667" stroke="#000"/>
<line x1="610.5" y1="664" x2="610.5" y2="668" stroke="#000"/>
<line x1="619.5" y1="664" x2="619.5" y2="667" stroke="#000"/>
<line x1="628.5" y1="664" x2="628.5" y2="667" stroke="#000"/>
<line x1="638.5" y1="664" x2="638.5" y2="667" stroke="#000"/>
<line x1="647.5" y1="664" x2="647.5" y2="667" stroke="#000"/>
<line x1="656.5" y1="664" x2="656.5" y2="668" stroke="#000"/>
<line x1="666.5" y1="664" x2="666.5" y2="667" stroke="#000"/>
<line x1="675.5" y1="664" x2="675.5" y2="667" stroke="#000"/>
<line x1="684.5" y1="664" x2="684.5" y2="667" stroke="#000"/>
<line x1="694.5" y1="664" x2="694.5" y2="667" stroke="#000"/>
<line x1="703.5" y1="664" x2="703.5" y2="668" stroke="#000"/>
<line x1="712.5" y1="664" x2="712.5" y2="667" stroke="#000"/>
<line x1="722.5" y1="664" x2="722.5" y2="667" stroke="#000"/>
<line x1="731.5" y1="664" x2="731.5" y2="667" stroke="#000"/>
<line x1="740.5" y1="664" x2="740.5" y2="667" stroke="#000"/>
<line x1="750.5" y1="664" x2="750.5" y2="668" stroke="#000"/>
<line x1="759.5" y1="664" x2="759.5" y2="667" stroke="#000"/>
<line x1="768.5" y1="664" x2="768.5" y2="667" stroke="#000"/>
<line x1="778.5" y1="664" x2="778.5" y2="667" stroke="#000"/>
<line x1="787.5" y1="664" x2="787.5" y2="667" stroke="#000"/>
<line x1="796.5" y1="664" x2="796.5" y2="668" stroke="#000"/>
<line x1="806.5" y1="664" x2="806.5" y2="667" stroke="#000"/>
<line x1="815.5" y1="664" x2="815.5" y2="667" stroke="#000"/>
<line x1="824.5" y1="664" x2="824.5" y2="667" stroke="#000"/>
<line x1="834.5" y1="664" x2="834.5" y2="667" stroke="#000"/>
<line x1="843.5" y1="664" x2="843.5" y2="668" stroke="#000"/>
<line x1="852.5" y1="664" x2="852.5" y2="667" stroke="#000"/>
<line x1="862.5" y1="664" x2="862.5" y2="667" stroke="#000"/>
<line x1="871.5" y1="664" x2="871.5" y2="667" stroke="#000"/>
<line x1="880.5" y1="664" x2="880.5" y2="667" stroke="#000"/>
<line x1="890.5" y1="664" x2="890.5" y2="668" stroke="#000"/>
<line x1="899.5" y1="664" x2="899.5" y2="667" stroke="#000"/>
<line x1="908.5" y1="664" x2="908.5" y2="667" stroke="#000"/>
<line x1="917.5" y1="664" x2="917.5" y2="667" stroke="#000"/>
<line x1="927.5" y1="664" x2="927.5" y2="667" stroke="#000"/>
<line x1="936.5" y1="664" x2="936.5" y2="668" stroke="#000"/>
<line x1="945.5" y1="664" x2="945.5" y2="667" stroke="#000"/>
<line x1="955.5" y1="664" x2="955.5" y2="667" stroke="#000"/>
<line x1="964.5" y1="664" x2="964.5" y2="667" stroke="#000"/>
<line x1="973.5" y1="664" x2="973.5" y2="667" stroke="#000"/>
<line x1="983.5" y1="664" x2="983.5" y2="668" stroke="#000"/>
<line x1="992.5" y1="664" x2="992.5" y2="667" stroke="#000"/>
<line x1="1001.5" y1="664" x2="1001.5" y2="667" stroke="#000"/>
</svg>
<svg style="left:0;top:0" width="1024" height="738" font-family="Liberation Sans" font-size="11">
<text x="283.5" y="676" text-anchor="middle">0.00</text>
<text x="330.5" y="676" text-anchor="middle">0.02</text>
<text x="377.5" y="676" text-anchor="middle">0.04</text>
<text x="423.5" y="676" text-anchor="middle">0.06</text>
<text x="470.5" y="676" text-anchor="middle">0.08</text>
<text x="517.5" y="676" text-anchor="middle">0.10</text>
<text x="563.5" y="676" text-anchor="middle">0.12</text>
<text x="610.5" y="676" text-anchor="middle">0.14</text>
<text x="656.5" y="676" text-anchor="middle">0.16</text>
<text x="703.5" y="676" text-anchor="middle">0.18</text>
<text x="750.5" y="676" text-anchor="middle">0.20</text>
<text x="796.5" y="676" text-anchor="middle">0.22</text>
<text x="843.5" y="676" text-anchor="middle">0.24</text>
<text x="890.5" y="676" text-anchor="middle">0.26</text>
<text x="936.5" y="676" text-anchor="middle">0.28</text>
<text x="983.5" y="676" text-anchor="middle">0.30</text>
<text x="1011" y="675" font-family="Liberation Serif" font-size="12" stroke="#000" stroke-width="0.3">F</text>
<text transform="translate(236,623.5) rotate(-90)" text-anchor="middle">0.00</text>
<text transform="translate(236,590.5) rotate(-90)" text-anchor="middle">0.05</text>
<text transform="translate(236,557.5) rotate(-90)" text-anchor="middle">0.10</text>
<text transform="translate(236,524.5) rotate(-90)" text-anchor="middle">0.15</text>
<text transform="translate(236,491.5) rotate(-90)" text-anchor="middle">0.20</text>
<text transform="translate(236,458.5) rotate(-90)" text-anchor="middle">0.25</text>
<text transform="translate(236,425.5) rotate(-90)" text-anchor="middle">0.30</text>
<text transform="translate(236,392.5) rotate(-90)" text-anchor="middle">0.35</text>
<text transform="translate(236,359.5) rotate(-90)" text-anchor="middle">0.40</text>
<text transform="translate(236,326.5) rotate(-90)" text-anchor="middle">0.45</text>
<text transform="translate(236,293.5) rotate(-90)" text-anchor="middle">0.50</text>
<text transform="translate(236,260.5) rotate(-90)" text-anchor="middle">0.55</text>
<text transform="translate(236,227.5) rotate(-90)" text-anchor="middle">0.60</text>
<text transform="translate(236,194.5) rotate(-90)" text-anchor="middle">0.65</text>
<text transform="translate(236,161.5) rotate(-90)" text-anchor="middle">0.70</text>
<text transform="translate(236,128.5) rotate(-90)" text-anchor="middle">0.75</text>
<text transform="translate(236,95.5) rotate(-90)" text-anchor="middle">0.80</text>
<text transform="translate(236,82) rotate(-90)" text-anchor="middle">a</text>
<line x1="241" y1="658.5" x2="999.5" y2="78" stroke="#ff0000" stroke-width="2.5" shape-rendering="crispEdges"/>
<rect x="396.0" y="539.0" width="5" height="5" fill="#ff0000"/>
<rect x="509.5" y="443.5" width="5" height="5" fill="#ff0000"/>
<rect x="624.0" y="362.5" width="5" height="5" fill="#ff0000"/>
<rect x="738.0" y="271.0" width="5" height="5" fill="#ff0000"/>
<rect x="853.0" y="188.0" width="5" height="5" fill="#ff0000"/>
</svg>
<div class="bb" style="left:265px;top:682px;width:35px;height:30px;"></div>
<div class="bb" style="left:302px;top:682px;width:35px;height:30px;"></div>
<div class="bb" style="left:339px;top:682px;width:35px;height:30px;"></div>
<div class="bb" style="left:376px;top:682px;width:35px;height:30px;"></div>
<div class="bb" style="left:427px;top:682px;width:35px;height:30px;"></div>
<div class="dith" style="left:228px;top:682px;width:35px;height:30px;border:1px solid #000;border-radius:3px;box-shadow:inset 2px 2px #808080,inset -1px -1px #fff"></div>
<svg style="left:0;top:0" width="1024" height="738"><path d="M240.5 688.5L251.5 699L247.5 699L251 706L249 707.5L245.5 700.5L240.5 704.5z" fill="#fff" stroke="#000"/><path d="M278.5 705.5L274.5 698L274.5 692.5L276.5 691L277.5 688.5L279.5 687.5L282 687L284.5 687.5L287 688.5L289.5 691L290 697L288 701L286.5 704L286.5 705.5z" fill="#fff" stroke="#000"/><path d="M274.5 693L278.5 705" stroke="#909090"/><path d="M277.5 691V697M280.5 688V692.5M283.5 688V692.5M286.5 689V694" stroke="#000"/><path d="M278 705.5H280" stroke="#0000a0"/><path d="M308 690.5H318M313.5 685V696" stroke="#404050"/><path d="M319.5 709.5L312.5 697.5L313 696L314.5 696.5L318.5 699.5L318.5 688L320 687L321.5 688L321.5 693L324.5 693.5L327.5 694.5L330.5 696.5L330.5 703L328 709.5z" fill="#fff" stroke="#000"/><path d="M312.5 697.5L319.5 709.5" stroke="#909090"/><path d="M321.5 688V697.5M324.5 693.5V697.5M327.5 694.5V698.5" stroke="#000"/><path d="M319 710H321" stroke="#0000a0" stroke-width="1.2"/><path d="M359.5 700.5L368.0 709.0" stroke="#808000" stroke-width="2.2"/><circle cx="353.5" cy="694.5" r="6.8" fill="#fff" stroke="#101030" stroke-width="1.1"/><path d="M357.0 701.0L360.5 697.5L360.5 701.0z" fill="#000080"/><path d="M351.0 694.5H356.0M353.5 692.0V697.0" stroke="#000" stroke-width="1.2"/><path d="M396.5 700.5L405.0 709.0" stroke="#808000" stroke-width="2.2"/><circle cx="390.5" cy="694.5" r="6.8" fill="#fff" stroke="#101030" stroke-width="1.1"/><path d="M394.0 701.0L397.5 697.5L397.5 701.0z" fill="#000080"/><path d="M388.0 694.5H393.0" stroke="#000" stroke-width="1.2"/><path d="M428 696L444 701L444 709.5L430 704z" fill="#c8c8c8" stroke="#707070" stroke-width="0.7"/><path d="M444 701L457 694L458 702L444 709.5z" fill="#a4a4a4" stroke="#505050" stroke-width="0.7"/><path d="M428 696L441 690L457 694L444 701z" fill="#e0e0e0" stroke="#909090" stroke-width="0.7"/><path d="M457.5 694V702" stroke="#000" stroke-width="1.2"/><path d="M429 704.5L440.5 710.5L460.5 698.5" stroke="#000" stroke-width="1.4" fill="none"/><path d="M429.5 697V703.5" stroke="#fff" stroke-width="1"/><path d="M442 692L447 684L456 687L450 695z" fill="#fff" stroke="#000" stroke-width="0.8"/><path d="M448 686.5L451 687.5M447 688.5L450 689.5M446 690.5L449 691.5M445 692.5L448 693.5" stroke="#000090" stroke-width="1.2"/><path d="M441 698.5L448 694.5" stroke="#000" stroke-width="1.2"/><rect x="434.5" y="696" width="2" height="1.3" fill="#00d000"/><rect x="437" y="697.2" width="2.2" height="1.3" fill="#ff0000"/></svg>
<div class="" style="left:0px;top:718px;width:1024px;height:1px;background:#fff"></div>
<div class="t" style="left:2px;top:723px;font-size:12px;line-height:12px">就绪</div>
<div class="" style="left:930px;top:721px;width:30px;height:17px;border-left:1px solid #808080;border-top:1px solid #808080;border-right:1px solid #fff;border-bottom:1px solid #fff"></div>
<div class="" style="left:962px;top:721px;width:30px;height:17px;border-left:1px solid #808080;border-top:1px solid #808080;border-right:1px solid #fff;border-bottom:1px solid #fff"></div>
<div class="" style="left:994px;top:721px;width:30px;height:17px;border-left:1px solid #808080;border-top:1px solid #808080;border-right:1px solid #fff;border-bottom:1px solid #fff"></div>
</body></html>
